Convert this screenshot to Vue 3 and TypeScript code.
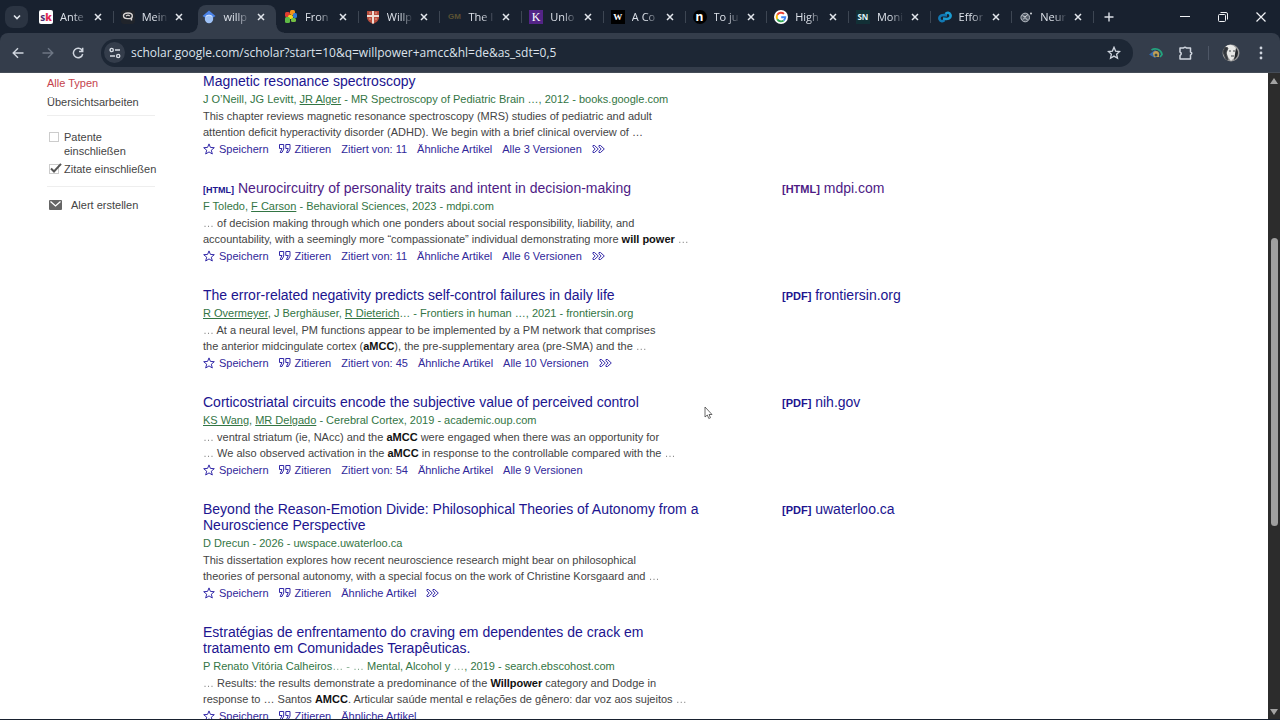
<script setup lang="ts">
interface Tab { title: string; icon: string; active?: boolean }
interface Part { t: string; k?: 'a' | 'b' | 'e' }
interface Result {
  tag?: string
  title: string[]
  visited?: boolean
  meta: Part[]
  lines: Part[][]
  links: string[]
  more?: boolean
  source?: { kind: string; site: string }
}

const tabs: Tab[] = [
  { title: 'Ante', icon: 'sk' },
  { title: 'Mein', icon: 'chat' },
  { title: 'willp', icon: 'scholar', active: true },
  { title: 'Fron', icon: 'frontiers' },
  { title: 'Willp', icon: 'shield' },
  { title: 'The I', icon: 'gm' },
  { title: 'Unlo', icon: 'k' },
  { title: 'A Co', icon: 'w' },
  { title: 'To ju', icon: 'n' },
  { title: 'High', icon: 'google' },
  { title: 'Moni', icon: 'sn' },
  { title: 'Effor', icon: 'link' },
  { title: 'Neur', icon: 'globe' },
]

const results: Result[] = [
  {
    title: ['Magnetic resonance spectroscopy'],
    meta: [{ t: 'J O’Neill, JG Levitt, ' }, { t: 'JR Alger', k: 'a' }, { t: ' - MR Spectroscopy of Pediatric Brain …, 2012 - books.google.com' }],
    lines: [
      [{ t: 'This chapter reviews magnetic resonance spectroscopy (MRS) studies of pediatric and adult' }],
      [{ t: 'attention deficit hyperactivity disorder (ADHD). We begin with a brief clinical overview of …' }],
    ],
    links: ['Zitiert von: 11', 'Ähnliche Artikel', 'Alle 3 Versionen'],
    more: true,
  },
  {
    tag: '[HTML]',
    title: ['Neurocircuitry of personality traits and intent in decision-making'],
    visited: true,
    meta: [{ t: 'F Toledo, ' }, { t: 'F Carson', k: 'a' }, { t: ' - Behavioral Sciences, 2023 - mdpi.com' }],
    lines: [
      [{ t: '… ', k: 'e' }, { t: 'of decision making through which one ponders about social responsibility, liability, and' }],
      [{ t: 'accountability, with a seemingly more “compassionate” individual demonstrating more ' }, { t: 'will power', k: 'b' }, { t: ' …', k: 'e' }],
    ],
    links: ['Zitiert von: 11', 'Ähnliche Artikel', 'Alle 6 Versionen'],
    more: true,
    source: { kind: '[HTML]', site: 'mdpi.com' },
  },
  {
    title: ['The error-related negativity predicts self-control failures in daily life'],
    meta: [{ t: 'R Overmeyer', k: 'a' }, { t: ', J Berghäuser, ' }, { t: 'R Dieterich', k: 'a' }, { t: '… - Frontiers in human …, 2021 - frontiersin.org' }],
    lines: [
      [{ t: '… ', k: 'e' }, { t: 'At a neural level, PM functions appear to be implemented by a PM network that comprises' }],
      [{ t: 'the anterior midcingulate cortex (' }, { t: 'aMCC', k: 'b' }, { t: '), the pre-supplementary area (pre-SMA) and the' }, { t: ' …', k: 'e' }],
    ],
    links: ['Zitiert von: 45', 'Ähnliche Artikel', 'Alle 10 Versionen'],
    more: true,
    source: { kind: '[PDF]', site: 'frontiersin.org' },
  },
  {
    title: ['Corticostriatal circuits encode the subjective value of perceived control'],
    meta: [{ t: 'KS Wang', k: 'a' }, { t: ', ' }, { t: 'MR Delgado', k: 'a' }, { t: ' - Cerebral Cortex, 2019 - academic.oup.com' }],
    lines: [
      [{ t: '… ', k: 'e' }, { t: 'ventral striatum (ie, NAcc) and the ' }, { t: 'aMCC', k: 'b' }, { t: ' were engaged when there was an opportunity for' }],
      [{ t: '… ', k: 'e' }, { t: 'We also observed activation in the ' }, { t: 'aMCC', k: 'b' }, { t: ' in response to the controllable compared with the' }, { t: ' …', k: 'e' }],
    ],
    links: ['Zitiert von: 54', 'Ähnliche Artikel', 'Alle 9 Versionen'],
    source: { kind: '[PDF]', site: 'nih.gov' },
  },
  {
    title: ['Beyond the Reason-Emotion Divide: Philosophical Theories of Autonomy from a', 'Neuroscience Perspective'],
    meta: [{ t: 'D Drecun - 2026 - uwspace.uwaterloo.ca' }],
    lines: [
      [{ t: 'This dissertation explores how recent neuroscience research might bear on philosophical' }],
      [{ t: 'theories of personal autonomy, with a special focus on the work of Christine Korsgaard and' }, { t: ' …', k: 'e' }],
    ],
    links: ['Ähnliche Artikel'],
    more: true,
    source: { kind: '[PDF]', site: 'uwaterloo.ca' },
  },
  {
    title: ['Estratégias de enfrentamento do craving em dependentes de crack em', 'tratamento em Comunidades Terapêuticas.'],
    meta: [{ t: 'P Renato Vitória Calheiros' }, { t: '… - …', k: 'e' }, { t: ' Mental, Alcohol y ' }, { t: '…', k: 'e' }, { t: ', 2019 - search.ebscohost.com' }],
    lines: [
      [{ t: '… ', k: 'e' }, { t: 'Results: the results demonstrate a predominance of the ' }, { t: 'Willpower', k: 'b' }, { t: ' category and Dodge in' }],
      [{ t: 'response to … Santos ' }, { t: 'AMCC', k: 'b' }, { t: '. Articular saúde mental e relações de gênero: dar voz aos sujeitos' }, { t: ' …', k: 'e' }],
    ],
    links: ['Ähnliche Artikel'],
  },
]
</script>

<template>
  <div class="browser">
    <header class="strip">
      <button class="tab-search" aria-label="Tabs durchsuchen">
        <svg width="10" height="10" viewBox="0 0 10 10"><path d="M2 3.5 5 6.5 8 3.5" fill="none" stroke="#e0e5ec" stroke-width="1.6" /></svg>
      </button>
      <div class="tabs">
        <div v-for="(tab, i) in tabs" :key="i" class="tab" :class="{ active: tab.active, before: tabs[i + 1]?.active }">
          <span class="fav" :class="tab.icon">
            <template v-if="tab.icon === 'sk'"><span class="two-tone">s<b>k</b></span></template>
            <svg v-else-if="tab.icon === 'chat'" width="14" height="14" viewBox="0 0 14 14">
              <rect width="14" height="14" rx="3" fill="#20242b" />
              <path d="M10.500 10.500V8.600M10.500 8.600H6.500C3.800 8.600 2.500 7.500 2.500 5.800S4 3 7 3s4.300 1.100 4.300 3-1 2.600-3 2.600M5.200 6.200C5.600 4.800 8.500 4.800 8.500 6.300" fill="none" stroke="#d8d4d2" stroke-width="1.400" />
            </svg>
            <svg v-else-if="tab.icon === 'scholar'" width="14" height="14" viewBox="0 0 14 14">
              <path d="M7 .5 13.500 6 10.500 8 3.500 8 .5 6Z" fill="#4b83e8" />
              <circle cx="7" cy="9" r="4.200" fill="#9fc2f7" />
              <path d="M3 7.200a4.500 4.500 0 0 1 8 0L7 5.500Z" fill="#d4e4fc" />
            </svg>
            <svg v-else-if="tab.icon === 'frontiers'" width="14" height="14" viewBox="0 0 14 14">
              <rect x="1" y="2" width="5" height="5" rx="1.500" fill="#e03c31" />
              <rect x="6" y="0" width="5" height="5" rx="1.500" fill="#f7941c" />
              <rect x="9" y="3" width="4" height="5" rx="1.500" fill="#3179d0" />
              <rect x="4" y="5" width="5" height="4" rx="1.500" fill="#f4d51f" />
              <rect x="1" y="7" width="5" height="6" rx="1.500" fill="#5fba46" />
              <rect x="7" y="8" width="5" height="4" rx="1.500" fill="#75c043" />
            </svg>
            <svg v-else-if="tab.icon === 'shield'" width="14" height="14" viewBox="0 0 14 14">
              <path d="M1 1h12v6c0 4-3 5.500-6 7-3-1.500-6-3-6-7Z" fill="#b84d3d" />
              <path d="M7 1v12.500M1 6h12" stroke="#f0dfd5" stroke-width="2" />
              <path d="M3 3h2M9 3h2M3 9h2M9 9h2" stroke="#e2ad98" />
            </svg>
            <template v-else-if="tab.icon === 'gm'">GM</template>
            <template v-else-if="tab.icon === 'k'">K</template>
            <template v-else-if="tab.icon === 'w'">W</template>
            <template v-else-if="tab.icon === 'n'">n</template>
            <svg v-else-if="tab.icon === 'google'" width="14" height="14" viewBox="0 0 14 14">
              <circle cx="7" cy="7" r="7" fill="#fff" />
              <g fill="none" stroke-width="1.900">
                <path d="M3.300 4.800A4.300 4.300 0 0 1 10 3.900" stroke="#ea4335" />
                <path d="M3.300 4.800a4.300 4.300 0 0 0 0 4.400" stroke="#fbbc05" />
                <path d="M3.300 9.200a4.300 4.300 0 0 0 6.400 1.200" stroke="#34a853" />
                <path d="M9.700 10.400A4.300 4.300 0 0 0 11.300 7.200H7.200" stroke="#4285f4" />
              </g>
            </svg>
            <template v-else-if="tab.icon === 'sn'">SN</template>
            <svg v-else-if="tab.icon === 'link'" width="14" height="14" viewBox="0 0 14 14">
              <path d="M9 5.500 5.500 5C2 5 .8 7.500 1.700 9.500S5 12 6.500 10" fill="none" stroke="#1279b4" stroke-width="2.600" />
              <path d="M5 8.500 8.500 9c3.500 0 4.700-2.500 3.800-4.500S9 2 7.500 4" fill="none" stroke="#1a9cd2" stroke-width="2.600" />
            </svg>
            <svg v-else width="14" height="14" viewBox="0 0 14 14">
              <circle cx="6.200" cy="7.500" r="4.300" fill="#525b67" stroke="#bbc1c8" />
              <path d="M3.500 5.500 6 7l3-2.500M4 9.500l2-2 2.500 2.500" fill="none" stroke="#d4d8dd" />
              <circle cx="12" cy="3.500" r="1" fill="#d4d8dd" />
            </svg>
          </span>
          <span class="tab-title">{{ tab.title }}</span>
          <button class="close" aria-label="Tab schließen">
            <svg width="8" height="8" viewBox="0 0 8 8"><path d="M1 1 7 7M7 1 1 7" stroke="#e2e6ec" stroke-width="1.500" /></svg>
          </button>
        </div>
      </div>
      <button class="new-tab" aria-label="Neuer Tab">
        <svg width="10" height="10" viewBox="0 0 10 10"><path d="M5 .5v9M.5 5h9" stroke="#dbe0e7" stroke-width="1.400" /></svg>
      </button>
      <div class="window-buttons">
        <button aria-label="Minimieren"><svg width="10" height="10" viewBox="0 0 10 10"><path d="M0 4.500h10" stroke="#f1f3f6" /></svg></button>
        <button aria-label="Verkleinern">
          <svg width="10" height="10" viewBox="0 0 10 10" fill="none" stroke="#f1f3f6"><rect x=".5" y="2.500" width="7" height="7" rx="1" /><path d="M2.500.5H8Q9.500.5 9.500 2v5.500" /></svg>
        </button>
        <button aria-label="Schließen"><svg width="10" height="10" viewBox="0 0 10 10"><path d="M.5.5l9 9M9.500.5l-9 9" stroke="#f1f3f6" stroke-width="1.200" /></svg></button>
      </div>
    </header>

    <div class="toolbar">
      <div class="nav">
        <button aria-label="Zurück"><svg width="12" height="12" viewBox="0 0 12 12"><path d="M11.500 6h-10M6 1.200 1.200 6 6 10.800" fill="none" stroke="#d0d6df" stroke-width="1.400" /></svg></button>
        <button aria-label="Vor" disabled><svg width="12" height="12" viewBox="0 0 12 12"><path d="M.5 6h10M6 1.200 10.800 6 6 10.800" fill="none" stroke="#6d7684" stroke-width="1.400" /></svg></button>
        <button aria-label="Neu laden"><svg width="12" height="12" viewBox="0 0 12 12"><path d="M10.200 3.700A4.700 4.700 0 1 0 10.700 7M10.700.8V4.500H7" fill="none" stroke="#d0d6df" stroke-width="1.500" /></svg></button>
      </div>
      <div class="omnibox">
        <button class="site" aria-label="Website-Informationen">
          <svg width="12" height="12" viewBox="0 0 12 12" fill="none" stroke="#d8dde5" stroke-width="1.400"><circle cx="2.700" cy="3" r="1.600" /><path d="M6 3h5M1 9h5" /><circle cx="9.200" cy="9" r="1.600" /></svg>
        </button>
        <input type="text" aria-label="Adresse" value="scholar.google.com/scholar?start=10&amp;q=willpower+amcc&amp;hl=de&amp;as_sdt=0,5">
        <button class="mark" aria-label="Lesezeichen">
          <svg width="14" height="14" viewBox="0 0 14 14"><path d="M7 1.300 8.600 5.100l4 .4-3 2.700.9 4L7 10.100l-3.500 2.100.9-4-3-2.700 4-.4Z" fill="none" stroke="#d0d6df" stroke-width="1.300" /></svg>
        </button>
      </div>
      <div class="actions">
        <button aria-label="Erweiterung">
          <svg width="14" height="12" viewBox="0 0 14 12"><path d="M2.500 3C6 .5 12 2 13 7.500l-2 2.500" fill="none" stroke="#24a37e" stroke-width="1.700" /><path d="M0 7.500 6 3l5 4-5 4Z" fill="#356aac" /><path d="M4 7a3 3 0 0 1 6 0v3H5Z" fill="#c5a052" /><circle cx="7" cy="8" r="1.500" fill="#354c4b" /></svg>
        </button>
        <button aria-label="Erweiterungen">
          <svg width="14" height="14" viewBox="0 0 14 14"><path d="M1 2h3.500Q6 .3 7.500 2h4v4q2.500 1 0 3v4H1V9.500q2.500-2 0-3.500Z" fill="none" stroke="#d0d6df" stroke-width="1.500" stroke-linejoin="round" /></svg>
        </button>
        <span class="rule"></span>
        <button aria-label="Profil">
          <svg width="18" height="18" viewBox="0 0 18 18"><circle cx="9" cy="9" r="8.500" fill="#9a9a9a" /><path d="M3 3Q9-2 14 4l-1 9-4 4-3-4L4 7Z" fill="#e8e8e6" /><path d="M6 4 3 3 1 8l3 7 2 1-2-7ZM7 7h2M11 7h2M9 12h3" fill="#30343a" stroke="#43464a" /><path d="M14 4q4 5 0 10l-2 2 1-6Z" fill="#24272b" /></svg>
        </button>
        <button aria-label="Menü">
          <svg width="4" height="14" viewBox="0 0 4 14" fill="#d0d6df"><circle cx="2" cy="2" r="1.400" /><circle cx="2" cy="7" r="1.400" /><circle cx="2" cy="12" r="1.400" /></svg>
        </button>
      </div>
    </div>

    <div class="viewport">
      <main class="page">
        <aside>
          <a href="#" class="current">Alle Typen</a>
          <a href="#">Übersichtsarbeiten</a>
          <div class="filters">
            <label for="patents"><input id="patents" type="checkbox"><span>Patente<br>einschließen</span></label>
            <label for="quotes">
              <input id="quotes" type="checkbox" checked>
              <svg class="tick" width="13" height="11" viewBox="0 0 13 11"><path d="M2 5.500 5 8.500 12 .8" fill="none" stroke="#555" stroke-width="2" /></svg>
              <span>Zitate einschließen</span>
            </label>
          </div>
          <a href="#" class="alert">
            <svg width="13" height="10" viewBox="0 0 13 10"><rect width="13" height="10" rx="1" fill="#666" /><path d="M1.500 1.500 6.500 6l5-4.500" fill="none" stroke="#fff" stroke-width="1.300" /></svg>
            Alert erstellen
          </a>
        </aside>
        <section class="results">
          <article v-for="(r, i) in results" :key="i">
            <div class="entry">
              <h3>
                <span v-if="r.tag" class="tag">{{ r.tag }}</span>
                <a href="#" :class="{ visited: r.visited }"><template v-for="(t, j) in r.title" :key="j"><br v-if="j">{{ t }}</template></a>
              </h3>
              <p class="meta"><template v-for="(p, j) in r.meta" :key="j"><a v-if="p.k === 'a'" href="#">{{ p.t }}</a><span v-else :class="p.k">{{ p.t }}</span></template></p>
              <p class="snippet"><template v-for="(line, j) in r.lines" :key="j"><br v-if="j"><template v-for="(p, n) in line" :key="n"><b v-if="p.k === 'b'">{{ p.t }}</b><span v-else :class="p.k">{{ p.t }}</span></template></template></p>
              <div class="links">
                <a href="#" class="with-icon"><svg width="12" height="12" viewBox="0 0 12 12"><path d="M6 .9 7.400 4.400l3.900.3-3 2.500 1 3.800L6 8.900 2.700 11l1-3.800-3-2.500 3.900-.3Z" fill="none" stroke="#3329a8" /></svg>Speichern</a>
                <a href="#" class="with-icon"><svg width="12" height="12" viewBox="0 0 12 12"><path d="M3 5.500H.5v-4h4.200v4.600L3 9.500H1.200L3 5.500M9.300 5.500H6.800v-4H11v4.600L9.300 9.500H7.500l1.800-4" fill="none" stroke="#3329a8" /></svg>Zitieren</a>
                <a v-for="l in r.links" :key="l" href="#">{{ l }}</a>
                <a v-if="r.more" href="#" aria-label="Mehr"><svg width="13" height="10" viewBox="0 0 13 10"><path d="M1 1.500h1.500L6.300 5 2.500 8.500H1V7.200L3.200 5 1 2.800ZM7 1.500h1.500L12.300 5 8.500 8.500H7V7.200L9.200 5 7 2.800Z" fill="none" stroke="#3329a8" /></svg></a>
              </div>
            </div>
            <a v-if="r.source" href="#" class="source" :class="{ visited: r.visited }"><b>{{ r.source.kind }}</b> {{ r.source.site }}</a>
          </article>
        </section>
      </main>
      <div class="scrollbar">
        <svg width="10" height="8" viewBox="0 0 10 8"><path d="M5 1 9 7H1Z" fill="#a3a3a3" /></svg>
        <div class="track"><div class="thumb"></div></div>
        <svg width="10" height="8" viewBox="0 0 10 8"><path d="M5 7 9 1H1Z" fill="#a3a3a3" /></svg>
      </div>
    </div>
    <svg class="pointer" width="9" height="14" viewBox="0 0 9 14"><path d="M1 1v10l2.300-2 1.500 3.500 1.700-.8L5 8.500h3Z" fill="#fff" stroke="#444" stroke-width=".8" /></svg>
  </div>
</template>

<style>
body { background: #18212f; }
</style>

<style scoped>
* { box-sizing: border-box; }
.browser { position: relative; display: flex; flex-direction: column; height: 100vh; overflow: hidden; background: #18212f; font-family: "Liberation Sans", Arial, sans-serif; }
button { display: grid; place-items: center; padding: 0; border: 0; background: none; }
svg { display: block; flex: none; }
a { color: inherit; text-decoration: none; }
.strip { display: flex; height: 33px; font-family: "Open Sans", sans-serif; }
.tab-search { width: 23px; height: 22px; margin: 6px 4px 0 5px; border-radius: 8px; background: #2b3442; }
.tabs { display: flex; flex: 1; min-width: 0; }
.tab { position: relative; display: flex; align-items: center; flex: 1; min-width: 0; padding: 0 12px 0 7px; color: #dce1e9; font-size: 11px; }
.tab::after { content: ""; position: absolute; right: 0; top: 11px; width: 1px; height: 12px; background: #3d4653; }
.tab.before::after { display: none; }
.tab.active { isolation: isolate; }
.tab.active::before { content: ""; position: absolute; z-index: -1; inset: 5px 1px 0 3px; border-radius: 8px 8px 0 0; background: #343d4b; }
.tab.active::after { z-index: -1; left: -5px; right: -7px; top: auto; bottom: 0; width: auto; height: 8px; background: radial-gradient(circle at 0 0, transparent 7px, #343d4b 8px) left / 8px 8px no-repeat, radial-gradient(circle at 100% 0, transparent 7px, #343d4b 8px) right / 8px 8px no-repeat; }
.fav { display: grid; place-items: center; flex: none; width: 14px; height: 14px; margin-right: 7px; line-height: 14px; }
.sk { border-radius: 2px; background: #fff; color: #4d2e73; font: 700 10px/14px "Open Sans", sans-serif; }
.sk b { color: #e22b55; }
.gm { color: #5b5233; font: 700 8px/14px "Liberation Sans", sans-serif; }
.k { background: #532487; color: #fff; font: 12px/14px "Liberation Serif", serif; }
.w { background: #000; color: #fff; font: 700 9px/14px "Liberation Serif", serif; }
.n { border-radius: 7px; background: #000; color: #fff; font: 700 12px/14px "Noto Sans", sans-serif; }
.sn { background: #123036; color: #dff4f6; font: 700 8px/14px "Noto Sans", sans-serif; }
.tab-title { flex: 1; min-width: 0; white-space: nowrap; line-height: 18px; mask-image: linear-gradient(90deg, #000 50%, transparent); }
.close { width: 8px; height: 16px; margin-left: 7px; }
.new-tab { width: 30px; }
.window-buttons { display: flex; padding-left: 42px; }
.window-buttons button { width: 38px; }
.toolbar { display: flex; align-items: center; height: 40px; padding-left: 8px; border-radius: 8px 8px 0 0; background: #343d4b; border-bottom: 1px solid #454c57; }
.nav { display: flex; gap: 10px; }
.nav button { width: 20px; height: 24px; }
.nav + .omnibox { margin-left: 13px; }
.omnibox { display: flex; align-items: center; flex: 1; min-width: 0; height: 28px; padding: 0 12px 0 3px; border-radius: 14px; background: #1d2735; }
.site { width: 21px; height: 21px; border-radius: 11px; background: #343d4b; }
.omnibox input { flex: 1; min-width: 0; height: 24px; padding: 0; margin-left: 6px; border: 0; outline: 0; background: none; color: #dce2eb; font: 12px/24px "Open Sans", sans-serif; }
.actions { display: flex; align-items: center; padding: 0 17px 0 16px; }
.actions button + button { margin-left: 16px; }
.rule { width: 1px; height: 14px; margin: 0 13px 0 15px; background: #4e5766; }
.actions button:last-child { margin-left: 19px; }
.viewport { display: flex; flex: 1; min-height: 0; margin-bottom: 1px; background: #fff; }
.page { display: flex; flex: 1; min-width: 0; overflow: hidden; font-size: 11px; line-height: 16px; }
aside { flex: none; width: 203px; padding: 2px 47px 0; color: #444; white-space: nowrap; }
aside > a { display: block; margin-bottom: 3px; }
aside > a.current { color: #c5434c; }
.filters { display: grid; gap: 4px; width: 108px; margin-top: 5px; padding: 14px 0 10px; border: solid #eee; border-width: 1px 0; }
.filters label { position: relative; display: flex; gap: 5px; line-height: 14px; padding-left: 2px; }
.filters input { appearance: none; flex: none; width: 10px; height: 10px; margin: 2px 0 0; border: 1px solid #ccc; background: #fff; }
.tick { position: absolute; left: 2px; top: 1px; }
aside > a.alert { display: flex; align-items: center; gap: 9px; margin-top: 10px; padding-left: 2px; }
.results { flex: 1; min-width: 0; }
article { display: grid; grid-template-columns: 579px 1fr; margin-bottom: 23px; white-space: nowrap; }
h3 { margin: 0 0 2px; color: #20148f; font-size: 14px; font-weight: 400; line-height: 16px; }
.tag { margin-right: 4px; font-size: 9px; font-weight: 700; line-height: 1; }
h3 .visited, .source.visited { color: #4e1b85; }
p { margin: 0; }
.meta { margin-bottom: 1px; color: #337544; }
.meta a { text-decoration: underline; }
.snippet { color: #444; margin-bottom: 1px; }
.snippet b { color: #111; }
.e { opacity: .6; white-space: pre; }
.links { display: flex; align-items: center; gap: 10px; height: 16px; color: #31289a; }
.with-icon { display: flex; align-items: center; gap: 4px; }
.source { color: #20148f; font-size: 14px; line-height: 16px; }
.source b { font-size: 11px; line-height: 1; }
.scrollbar { display: flex; flex-direction: column; align-items: center; width: 12px; padding: 4px 0 3px; background: #2c2c2c; }
.track { display: grid; flex: 1; grid-template-rows: 153fr 289fr 182fr; width: 7px; }
.thumb { grid-row: 2; border-radius: 4px; background: #9f9f9f; }
.pointer { position: absolute; left: 704px; top: 406px; }
</style>
